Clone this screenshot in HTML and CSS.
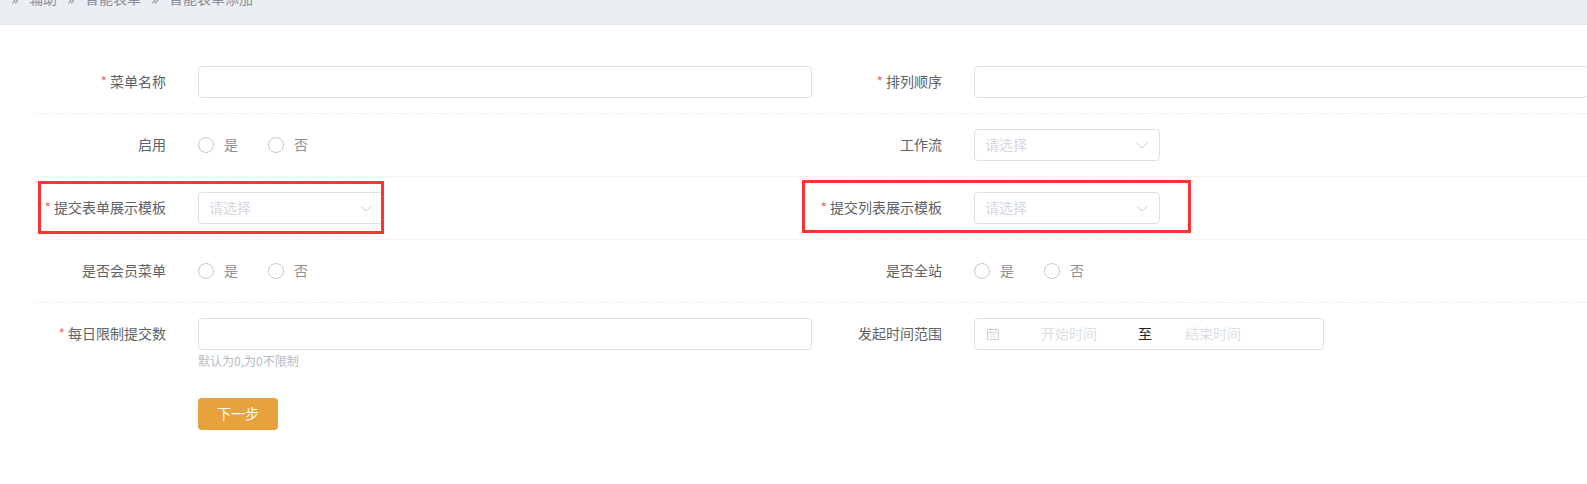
FILE: index.html
```html
<!DOCTYPE html>
<html lang="zh-CN">
<head>
<meta charset="utf-8">
<title>智能表单添加</title>
<link rel="stylesheet" href="styles.css">
</head>
<body>
<div class="crumbs">
  <span class="sep">»</span><span class="crumb">辅助</span>
  <span class="sep">»</span><span class="crumb">智能表单</span>
  <span class="sep">»</span><span class="crumb">智能表单添加</span>
</div>
<form class="form">
  <div class="row">
    <div class="item"><label class="label"><i class="req">*</i>菜单名称</label><input class="input" type="text"></div>
    <div class="item"><label class="label"><i class="req">*</i>排列顺序</label><input class="input" type="text"></div>
  </div>
  <div class="row">
    <div class="item"><label class="label">启用</label>
      <div class="radios"><span class="radio"><b class="dot"></b>是</span><span class="radio"><b class="dot"></b>否</span></div>
    </div>
    <div class="item"><label class="label">工作流</label>
      <div class="select"><span>请选择</span><svg class="chev" width="12" height="7" viewBox="0 0 12 7"><path d="M.5.5 6 6l5.500-5.500" fill="none" stroke="#c8cbd3" stroke-width="1"/></svg></div>
    </div>
  </div>
  <div class="row">
    <div class="item"><label class="label"><i class="req">*</i>提交表单展示模板</label>
      <div class="select"><span>请选择</span><svg class="chev" width="12" height="7" viewBox="0 0 12 7"><path d="M.5.5 6 6l5.500-5.500" fill="none" stroke="#c8cbd3" stroke-width="1"/></svg></div>
      <div class="mark mark-left"></div>
    </div>
    <div class="item"><label class="label"><i class="req">*</i>提交列表展示模板</label>
      <div class="select"><span>请选择</span><svg class="chev" width="12" height="7" viewBox="0 0 12 7"><path d="M.5.5 6 6l5.500-5.500" fill="none" stroke="#c8cbd3" stroke-width="1"/></svg></div>
      <div class="mark mark-right"></div>
    </div>
  </div>
  <div class="row">
    <div class="item"><label class="label">是否会员菜单</label>
      <div class="radios"><span class="radio"><b class="dot"></b>是</span><span class="radio"><b class="dot"></b>否</span></div>
    </div>
    <div class="item"><label class="label">是否全站</label>
      <div class="radios"><span class="radio"><b class="dot"></b>是</span><span class="radio"><b class="dot"></b>否</span></div>
    </div>
  </div>
  <div class="row row-last">
    <div class="item item-top"><label class="label"><i class="req">*</i>每日限制提交数</label>
      <div class="field"><input class="input" type="text"><p class="hint">默认为0,为0不限制</p></div>
    </div>
    <div class="item item-top"><label class="label">发起时间范围</label>
      <div class="range">
        <svg class="cal" width="14" height="14" viewBox="0 0 14 14"><path d="M1.500 2.500h11v10h-11zM1.500 5.500h11M4.500 1v2.500M9.500 1v2.500" fill="none" stroke="#cdd1d8" stroke-width="1"/><path d="M4 7.500h6M4 10h6" fill="none" stroke="#cdd1d8" stroke-width="1" stroke-dasharray="1.500 .8"/></svg>
        <span class="ph ph-start">开始时间</span><span class="to">至</span><span class="ph ph-end">结束时间</span>
      </div>
    </div>
  </div>
  <div class="actions"><button class="btn" type="button">下一步</button></div>
</form>
</body>
</html>
```

FILE: styles.css
```css
* { box-sizing: border-box; }
html, body { margin: 0; padding: 0; background: #fff; overflow: hidden; }
body {
  width: 1587px;
  height: 484px;
  font-family: "Noto Sans CJK SC", "Liberation Sans", sans-serif;
  font-size: 14px;
  color: #606266;
}
.crumbs {
  height: 25px;
  background: #ebeef3;
  border-bottom: 1px solid #e6e9ef;
  padding: 0 0 0 11px;
  display: flex;
  align-items: flex-end;
  overflow: hidden;
  color: #8a8f99;
  line-height: 20px;
}
.crumbs .sep { width: 18px; padding-bottom: 16px; font-size: 16px; }
.crumbs .crumb { margin-right: 10px; padding-bottom: 16px; }
.form { width: 1552px; margin-left: 36px; padding-top: 26px; }
.row {
  display: grid;
  grid-template-columns: 776px 776px;
  height: 63px;
  padding-top: 15px;
  border-bottom: 1px dashed #eeeef1;
}
.row-last { border-bottom: 0; height: 95px; }
.item { display: flex; align-items: flex-start; position: relative; }
.label {
  width: 130px;
  margin-right: 32px;
  height: 32px;
  line-height: 30px;
  text-align: right;
  white-space: nowrap;
  flex: none;
}
.req { color: #f56c6c; font-style: normal; margin-right: 3px; font-size: 14px; }
.input {
  display: block;
  width: 614px;
  height: 32px;
  border: 1px solid #dcdfe6;
  border-radius: 4px;
  background: #fff;
  padding: 0 10px;
  outline: 0;
}
.field { width: 614px; }
.hint { margin: 3px 0 0; font-size: 12px; line-height: 16px; color: #b4bbc4; }
.radios { display: flex; height: 30px; align-items: center; color: #8e9095; }
.radio { display: flex; align-items: center; width: 70px; }
.dot {
  width: 16px;
  height: 16px;
  border: 1px solid #c8c8cc;
  border-radius: 50%;
  margin-right: 10px;
  flex: none;
  position: relative;
  top: 1px;
}
.select {
  width: 186px;
  height: 32px;
  border: 1px solid #dcdfe6;
  border-radius: 4px;
  padding: 0 11px 2px 10px;
  display: flex;
  align-items: center;
  justify-content: space-between;
  color: #d6d8de;
}
.chev { position: relative; top: 1px; }
.mark { position: absolute; height: 53px; border: 3px solid #ff3333; pointer-events: none; }
.mark-left { left: 2px; top: -11px; width: 346px; }
.mark-right { left: -10px; top: -12px; width: 389px; }
.range {
  width: 350px;
  height: 32px;
  border: 1px solid #dcdfe6;
  border-radius: 4px;
  display: flex;
  align-items: center;
  padding: 0 0 2px 11px;
  color: #dcdfe4;
}
.cal { flex: none; position: relative; top: 1px; }
.ph { width: 56px; white-space: nowrap; }
.ph-start { margin-left: 41px; }
.to { margin: 0 33px 0 41px; color: #222; }
.actions { padding: 0 0 0 162px; }
.btn {
  width: 80px;
  height: 32px;
  border: 0;
  border-radius: 4px;
  background: #e6a33d;
  color: #fff;
  font: inherit;
  padding: 0 0 2px;
}
```
